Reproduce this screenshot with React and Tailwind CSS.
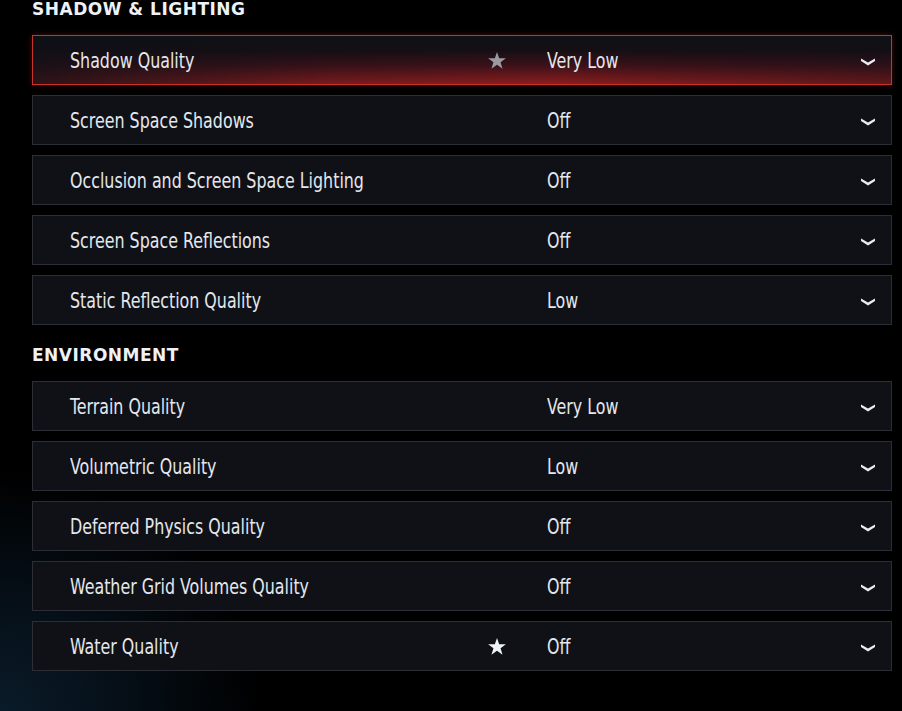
import React from "react";

const shadow = [
  { label: "Shadow Quality", value: "Very Low", star: "gray", active: true },
  { label: "Screen Space Shadows", value: "Off" },
  { label: "Occlusion and Screen Space Lighting", value: "Off" },
  { label: "Screen Space Reflections", value: "Off" },
  { label: "Static Reflection Quality", value: "Low" },
];
const env = [
  { label: "Terrain Quality", value: "Very Low" },
  { label: "Volumetric Quality", value: "Low" },
  { label: "Deferred Physics Quality", value: "Off" },
  { label: "Weather Grid Volumes Quality", value: "Off" },
  { label: "Water Quality", value: "Off", star: "white" },
];

const labelFont = { fontFamily: '"DejaVu Sans Condensed", "DejaVu Sans", sans-serif' };

function Star({ color }) {
  return (
    <svg width="18" height="17" viewBox="0 0 24 23" className={color === "white" ? "text-[#eef3f8]" : "text-[#9a9aa2]"}>
      <path fill="currentColor" d="M12 0l2.9 8.3H24l-7.2 5.4 2.7 8.9L12 17.2l-7.5 5.4 2.7-8.9L0 8.3h9.1z" />
    </svg>
  );
}

function Chevron() {
  return (
    <svg width="14" height="8" viewBox="0 0 14 8" className="text-[#e8ecf2]">
      <path fill="currentColor" d="M0 0.5L7 4.4L14 0.5L14 3L7 7.6L0 3Z" />
    </svg>
  );
}

function Row({ label, value, star, active }) {
  return (
    <div
      className={
        "flex h-[50px] items-center border " +
        (active
          ? "border-[#c8332b] bg-[linear-gradient(90deg,rgba(14,16,22,0.75)_0%,rgba(14,16,22,0.15)_35%,rgba(14,16,22,0)_60%,rgba(14,16,22,0.35)_100%),linear-gradient(180deg,#0f1117_0%,#150f14_30%,#3e1119_62%,#8c1d1d_100%)] shadow-[0_0_6px_rgba(200,40,30,0.35)]"
          : "border-[#2b2e36] bg-[#0f1116]")
      }
    >
      <span className="w-[454px] pl-[37px] pt-[4px]">
        <span className="inline-block origin-left scale-x-[0.84] whitespace-nowrap text-[21px] leading-none text-[#e4e7ed]" style={labelFont}>
          {label}
        </span>
      </span>
      <span className="flex w-[20px] justify-center pt-[1px]">{star ? <Star color={star} /> : null}</span>
      <span className="ml-[40px] flex-1 pt-[4px]">
        <span className="inline-block origin-left scale-x-[0.84] whitespace-nowrap text-[21px] leading-none text-[#e4e7ed]" style={labelFont}>
          {value}
        </span>
      </span>
      <span className="mr-[16px] flex w-[14px] justify-center pt-[3px]">
        <Chevron />
      </span>
    </div>
  );
}

function Heading({ children, className }) {
  return (
    <div
      className={"text-[17px] font-bold uppercase leading-[20px] tracking-[0.5px] text-[#eef1f5] " + className}
      style={{ fontFamily: '"DejaVu Sans", sans-serif' }}
    >
      {children}
    </div>
  );
}

export default function App() {
  return (
    <div className="h-[711px] w-[902px] overflow-hidden bg-[radial-gradient(ellipse_260px_240px_at_0%_100%,#0a1b29_0%,#050e16_50%,#000000_100%)]">
      <div className="ml-[32px] w-[860px]">
        <Heading className="mt-[-1px]">Shadow &amp; Lighting</Heading>
        <div className="mt-[16px] flex flex-col gap-[10px]">
          {shadow.map((r) => (
            <Row key={r.label} {...r} />
          ))}
        </div>
        <Heading className="mt-[20px]">Environment</Heading>
        <div className="mt-[16px] flex flex-col gap-[10px]">
          {env.map((r) => (
            <Row key={r.label} {...r} />
          ))}
        </div>
      </div>
    </div>
  );
}
